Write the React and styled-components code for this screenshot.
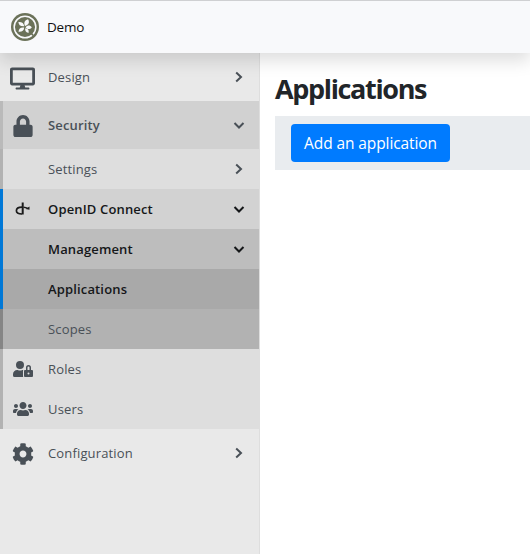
import React from 'react';
import styled, { createGlobalStyle } from 'styled-components';
import { FaDesktop, FaLock, FaUserLock, FaUsers, FaCog } from 'react-icons/fa';

const GlobalStyle = createGlobalStyle`
  * { box-sizing: border-box; }
  body {
    margin: 0;
    background: #fff;
    font-family: "Segoe UI", "Open Sans", "Noto Sans", sans-serif;
    overflow: hidden;
  }
`;

const Page = styled.div`
  display: flex;
  flex-direction: column;
  height: 554px;
`;

const Header = styled.header`
  position: relative;
  z-index: 2;
  display: flex;
  align-items: center;
  flex: 0 0 53px;
  padding-left: 11px;
  gap: 8px;
  background: #f8f9fb;
  border-top: 1px solid #cfd0d2;
  box-shadow: 0 8px 16px rgba(0, 0, 0, 0.13);
  color: #111;
  font-size: 13.5px;
  letter-spacing: -0.2px;
`;

const Body = styled.div`
  display: flex;
  flex: 1;
`;

const Sidebar = styled.nav`
  flex: 0 0 260px;
  background: #e9e9e9;
  border-right: 1px solid #dedede;
`;

const Row = styled.a`
  display: flex;
  align-items: center;
  height: ${(p) => (p.$tall ? 48 : 40)}px;
  padding-right: 13px;
  background: ${(p) => p.$bg || 'transparent'};
  border-left: 3px solid ${(p) => p.$bar || 'transparent'};
  color: ${(p) => (p.$active ? '#151719' : '#495057')};
`;

const IconSlot = styled.span`
  display: flex;
  justify-content: center;
  width: 39px;
  margin-right: 6px;
  padding-top: ${(p) => (p.$tall ? 2 : 0)}px;
`;

const Label = styled.span`
  flex: 1;
  font-size: 13px;
  line-height: 20px;
  font-weight: ${(p) => (p.$bold ? 600 : 400)};
  letter-spacing: 0.15px;
  white-space: nowrap;
`;

const Main = styled.main`
  flex: 1;
  padding: 18px 0 0 15px;
`;

const Title = styled.h1`
  margin: 0;
  height: 45px;
  color: #212529;
  font-size: 27px;
  line-height: 35px;
  font-weight: 700;
  letter-spacing: -1.35px;
`;

const Toolbar = styled.div`
  display: flex;
  align-items: center;
  height: 54px;
  padding-left: 16px;
  background: #e9ecef;
`;

const Button = styled.button`
  width: 159px;
  height: 38px;
  padding: 0;
  border: 0;
  border-radius: 4px;
  background: #007bff;
  color: #fff;
  font-family: inherit;
  font-size: 15.5px;
  letter-spacing: -0.1px;
  white-space: nowrap;
`;

const Logo = () => (
  <svg width="28" height="28" viewBox="0 0 28 28">
    <circle cx="14" cy="14" r="14" fill="#6b7259" />
    <circle cx="14" cy="14" r="10.8" fill="none" stroke="#f8f9fb" strokeWidth="1.5" />
    <g fill="#f8f9fb">
      <path d="M13.300 13.300C9.500 13.700 7.600 12 7.400 9c3.300-.3 5.400 1 5.900 4.300Z" />
      <path d="M14 13C12.500 9.800 13.500 7.500 17 6.300c2 3 .7 5.600-3 6.700Z" />
      <path d="M13.200 14.500c-.3 3.300-2.400 4.700-5.700 4.300.2-3.300 2.300-4.800 5.700-4.300Z" />
      <path d="M14.500 14.200c2.200-2.200 4.600-2.200 6.300.2-1.900 2.300-4.400 2.300-6.300-.2Z" />
      <path d="M14.200 15.200c2.600.2 3.900 1.700 3.600 4.500-2.700-.1-4-1.700-3.600-4.500Z" />
    </g>
    <path d="M18.200 18.200l4 4.300" stroke="#6b7259" strokeWidth="1.700" />
  </svg>
);

const OpenIdIcon = () => (
  <svg width="15" height="14" viewBox="0 0 15 14" fill="none" stroke="#1b1b1b">
    <path d="M7.700 .5v12" strokeWidth="2" />
    <path d="M7 5.200C3.500 5.200 1.400 6.500 1.400 8.700S3.500 11.900 7 12" strokeWidth="1.700" />
    <path d="M8.500 5.200c1.800.1 3 .5 4 1.200" strokeWidth="1.500" />
    <path d="M14.500 4.500v3.200l-4-.7Z" fill="#1b1b1b" stroke="none" />
  </svg>
);

const Chevron = ({ down }) => (
  <svg width="14" height="14" viewBox="0 0 14 14" fill="none" stroke="currentColor" strokeWidth="2">
    <path d={down ? 'M2.500 5l4.500 4.500L11.500 5' : 'M4.200 2.500L9 7l-4.800 4.500'} />
  </svg>
);

const items = [
  { label: 'Design', tall: true, icon: <FaDesktop size={25} />, arrow: 'right' },
  { label: 'Security', tall: true, bold: true, icon: <FaLock size={22} />, arrow: 'down', bg: '#d1d1d1', bar: '#bababa' },
  { label: 'Settings', arrow: 'right', bg: '#dedede', bar: '#b2b2b2' },
  { label: 'OpenID Connect', bold: true, active: true, icon: <OpenIdIcon />, arrow: 'down', bg: '#d2d2d2', bar: '#0078d7' },
  { label: 'Management', bold: true, active: true, arrow: 'down', bg: '#bdbdbd', bar: '#0078d7' },
  { label: 'Applications', bold: true, active: true, bg: '#a9a9a9', bar: '#0078d7' },
  { label: 'Scopes', bg: '#b2b2b2', bar: '#858585' },
  { label: 'Roles', icon: <FaUserLock size={20} />, bg: '#dedede', bar: '#b2b2b2' },
  { label: 'Users', icon: <FaUsers size={20} />, bg: '#dedede', bar: '#b2b2b2' },
  { label: 'Configuration', tall: true, icon: <FaCog size={22} />, arrow: 'right' },
];

export default function App() {
  return (
    <Page>
      <GlobalStyle />
      <Header>
        <Logo />
        <span>Demo</span>
      </Header>
      <Body>
        <Sidebar>
          {items.map((it) => (
            <Row key={it.label} $tall={it.tall} $bg={it.bg} $bar={it.bar} $active={it.active}>
              <IconSlot $tall={it.tall}>{it.icon}</IconSlot>
              <Label $bold={it.bold}>{it.label}</Label>
              {it.arrow && <Chevron down={it.arrow === 'down'} />}
            </Row>
          ))}
        </Sidebar>
        <Main>
          <Title>Applications</Title>
          <Toolbar>
            <Button>Add an application</Button>
          </Toolbar>
        </Main>
      </Body>
    </Page>
  );
}
